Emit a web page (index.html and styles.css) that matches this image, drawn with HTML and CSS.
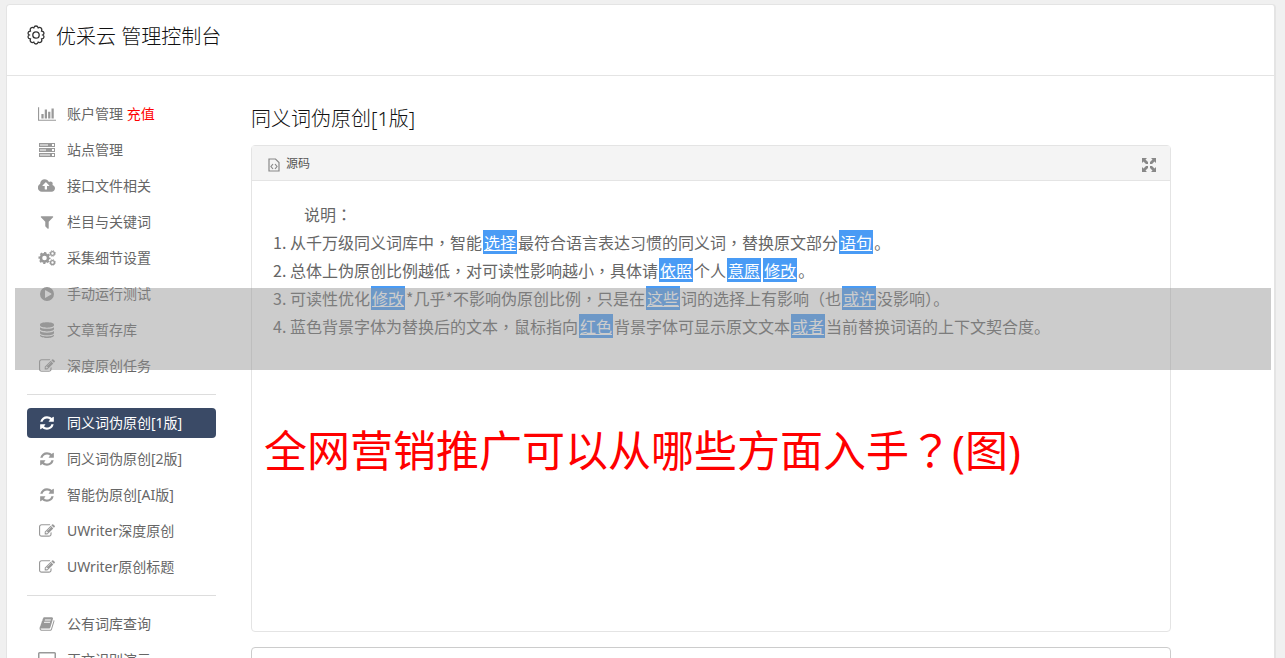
FILE: index.html
```html
<!DOCTYPE html>
<html lang="zh-CN">
<head>
<meta charset="utf-8">
<title>优采云 管理控制台</title>
<link rel="stylesheet" href="styles.css">
</head>
<body>
<svg class="sprite" aria-hidden="true">
  <symbol id="chart" viewBox="0 0 2048 1792"><path d="M640 896v512h-256v-512h256zm384-512v1024h-256v-1024h256zm1024 1152v128h-2048v-1536h128v1408h1920zm-640-896v768h-256v-768h256zm384-384v1152h-256v-1152h256z"/></symbol>
  <symbol id="server" viewBox="0 0 18 16"><path fill-rule="evenodd" d="M1 1h16v4H1zM2 2.500v1h8v-1zM14 2v2h2V2zM1 6h16v4H1zM2 7.500v1h6v-1zM14 7v2h2V7zM1 11h16v4H1zM2 12.500v1h10v-1zM14 12v2h2v-2z"/></symbol>
  <symbol id="cloud" viewBox="0 0 1920 1792"><path d="M1216 864q0-14-9-23l-352-352q-9-9-23-9t-23 9l-351 351q-10 12-10 24 0 14 9 23t23 9h224v352q0 13 9.500 22.500t22.500 9.500h192q13 0 22.500-9.500t9.500-22.500v-352h224q13 0 22.500-9.500t9.500-22.500zm640 288q0 159-112.500 271.500t-271.500 112.500h-1088q-185 0-316.500-131.500t-131.500-316.500q0-130 70-240t188-165q-2-30-2-43 0-212 150-362t362-150q156 0 285.500 87t188.500 231q71-62 166-62 106 0 181 75t75 181q0 76-41 138 130 31 213.500 135.500t83.500 238.500z"/></symbol>
  <symbol id="filter" viewBox="0 0 1792 1792"><path d="M1595 295q17 41-14 70l-493 493v742q0 42-39 59-13 5-25 5-27 0-45-19l-256-256q-19-19-19-45v-486l-493-493q-31-29-14-70 17-39 59-39h1280q42 0 59 39z"/></symbol>
  <symbol id="cogs" viewBox="0 0 18 16"><g fill="none" stroke="currentColor"><circle cx="6.500" cy="8" r="3.600" stroke-width="2.600"/><circle cx="6.500" cy="8" r="5.200" stroke-width="1.700" stroke-dasharray="2.200 1.884" stroke-dashoffset="1.100"/><circle cx="14.500" cy="3.500" r="1.900" stroke-width="1.400"/><circle cx="14.500" cy="3.500" r="2.800" stroke-width="1" stroke-dasharray="1.200 1"/><circle cx="14.500" cy="12.500" r="1.900" stroke-width="1.400"/><circle cx="14.500" cy="12.500" r="2.800" stroke-width="1" stroke-dasharray="1.200 1"/></g></symbol>
  <symbol id="play" viewBox="0 0 16 16"><path fill-rule="evenodd" d="M8 1a7 7 0 1 1 0 14A7 7 0 0 1 8 1zM6 4.500v7q0 .6.600.300l5.600-3.300q.6-.5 0-1L6.600 4.200Q6 4 6 4.500z"/></symbol>
  <symbol id="database" viewBox="0 0 16 16"><path d="M1 2.700C1-.5 15-.5 15 2.700v.6c0 3.200-14 3.200-14 0zM1 5.200c2 2.200 12 2.200 14 0v1.900c0 3.200-14 3.200-14 0zM1 9c2 2.200 12 2.200 14 0v1.900c0 3.200-14 3.200-14 0zM1 12.800c2 2.200 12 2.200 14 0v.6c0 3.300-14 3.300-14 0z"/></symbol>
  <symbol id="edit" viewBox="0 0 1792 1792"><path d="M888 1184l116-116-152-152-116 116v56h96v96h56zm440-720q-16-16-33 1l-350 350q-17 17-1 33t33-1l350-350q17-17 1-33zm80 594v190q0 119-84.500 203.500t-203.500 84.500h-832q-119 0-203.500-84.500t-84.500-203.500v-832q0-119 84.500-203.500t203.500-84.500h832q63 0 117 25 15 7 18 23 3 17-9 29l-49 49q-14 14-32 8-23-6-45-6h-832q-66 0-113 47t-47 113v832q0 66 47 113t113 47h832q66 0 113-47t47-113v-126q0-13 9-22l64-64q15-15 35-7t20 29zm-96-738l288 288-672 672h-288v-288zm444 132l-92 92-288-288 92-92q28-28 68-28t68 28l152 152q28 28 28 68t-28 68z"/></symbol>
  <symbol id="refresh" viewBox="0 0 1792 1792"><path d="M1639 1056q0 5-1 7-64 268-268 434.500t-478 166.500q-146 0-282.500-55t-243.500-157l-129 129q-19 19-45 19t-45-19-19-45v-448q0-26 19-45t45-19h448q26 0 45 19t19 45-19 45l-137 137q71 66 161 102t187 36q134 0 250-65t186-179q11-17 53-117 8-23 30-23h192q13 0 22.500 9.500t9.500 22.500zm25-800v448q0 26-19 45t-45 19h-448q-26 0-45-19t-19-45 19-45l138-138q-148-137-349-137-134 0-250 65t-186 179q-11 17-53 117-8 23-30 23h-199q-13 0-22.500-9.500t-9.500-22.500v-7q65-268 270-434.500t480-166.500q146 0 284 55.500t245 156.500l130-129q19-19 45-19t45 19 19 45z"/></symbol>
  <symbol id="book" viewBox="0 0 1792 1792"><path d="M1703 478q40 57 18 129l-275 906q-19 64-76.500 107.500t-122.500 43.500h-923q-77 0-148.500-53.500t-99.500-131.500q-24-67-2-127 0-4 3-27t4-37q1-8-3-21.500t-3-19.500q2-11 8-21t16.500-23.500 16.500-23.500q23-38 45-91.500t30-91.500q3-10 .5-30t-.5-28q3-11 17-28t17-23q21-36 42-92t25-90q1-9-2.500-32t.5-28q4-13 22-30.500t22-22.500q19-26 42.500-84.500t27.500-96.500q1-8-3-25.500t-2-26.500q2-8 9-18t18-23 17-21q8-12 16.500-30.500t15-35 16-36 19.500-32 26.500-23.500 36-11.500 47.500 5.500l-1 3q38-9 51-9h761q74 0 114 56t18 130l-274 906q-36 119-71.500 153.500t-128.500 34.500h-869q-27 0-38 15-11 16-1 43 24 70 144 70h923q29 0 56-15.500t35-41.500l300-987q7-22 5-57 38 15 59 43zm-1064 2q-4 13 2 22.500t20 9.500h608q13 0 25.500-9.500t16.500-22.500l21-64q4-13-2-22.500t-20-9.500h-608q-13 0-25.500 9.500t-16.500 22.500zm-83 256q-4 13 2 22.500t20 9.500h608q13 0 25.500-9.500t16.500-22.500l21-64q4-13-2-22.500t-20-9.500h-608q-13 0-25.500 9.500t-16.500 22.500z"/></symbol>
  <symbol id="screen" viewBox="0 0 18 16"><path fill-rule="evenodd" d="M1.500 0h15q1.500 0 1.500 1.500v10q0 1.500-1.500 1.500H11v1.500h2V16H5v-1.500h2V13H1.500Q0 13 0 11.500v-10Q0 0 1.500 0zm0 1.500v8.500h15V1.500z"/></symbol>
</svg>

<div class="panel">
  <header class="header">
    <svg class="gear" viewBox="0 0 20 20" aria-hidden="true"><path d="M7.800 2.800Q8.300 1 10 1t2.200 1.800q1.700-.8 2.900.3t.5 2.900Q17.900 6.400 18 8q0 1.300-1.300 2 1.300.7 1.300 2-.1 1.600-2.400 2 .7 1.800-.5 2.900t-2.900.3Q11.700 19 10 19t-2.200-1.800q-1.700.8-2.900-.3t-.5-2.900Q2.100 13.600 2 12q0-1.300 1.300-2Q2 9.300 2 8q.1-1.600 2.400-2-.7-1.800.5-2.900t2.900-.3z"/><circle cx="10" cy="10" r="3.200"/></svg>
    <h1 class="title">优采云 管理控制台</h1>
  </header>
  <div class="layout">
    <nav class="sidebar">
      <ul class="menu">
        <li><a class="item" href="#"><svg class="icon"><use href="#chart"/></svg><span>账户管理 <span class="recharge">充值</span></span></a></li>
        <li><a class="item" href="#"><svg class="icon"><use href="#server"/></svg>站点管理</a></li>
        <li><a class="item" href="#"><svg class="icon"><use href="#cloud"/></svg>接口文件相关</a></li>
        <li><a class="item" href="#"><svg class="icon"><use href="#filter"/></svg>栏目与关键词</a></li>
        <li><a class="item" href="#"><svg class="icon"><use href="#cogs"/></svg>采集细节设置</a></li>
        <li><a class="item" href="#"><svg class="icon"><use href="#play"/></svg>手动运行测试</a></li>
        <li><a class="item" href="#"><svg class="icon"><use href="#database"/></svg>文章暂存库</a></li>
        <li><a class="item" href="#"><svg class="icon"><use href="#edit"/></svg>深度原创任务</a></li>
      </ul>
      <hr class="rule">
      <ul class="menu">
        <li><a class="item active" href="#" aria-current="page"><svg class="icon"><use href="#refresh"/></svg>同义词伪原创[1版]</a></li>
        <li><a class="item" href="#"><svg class="icon"><use href="#refresh"/></svg>同义词伪原创[2版]</a></li>
        <li><a class="item" href="#"><svg class="icon"><use href="#refresh"/></svg>智能伪原创[AI版]</a></li>
        <li><a class="item" href="#"><svg class="icon"><use href="#edit"/></svg>UWriter深度原创</a></li>
        <li><a class="item" href="#"><svg class="icon"><use href="#edit"/></svg>UWriter原创标题</a></li>
      </ul>
      <hr class="rule">
      <ul class="menu">
        <li><a class="item" href="#"><svg class="icon"><use href="#book"/></svg>公有词库查询</a></li>
        <li><a class="item" href="#"><svg class="icon"><use href="#screen"/></svg>正文识别演示</a></li>
      </ul>
    </nav>
    <main class="main">
      <h2 class="heading">同义词伪原创[1版]</h2>
      <section class="editor">
        <div class="toolbar">
          <button class="tool" type="button"><svg class="source" viewBox="0 0 12 14" aria-hidden="true"><path d="M1 1h6.500L11 4.500V13H1zM5 6L3 8.500 5 11M7 6l2 2.500L7 11"/></svg>源码</button>
          <button class="tool" type="button" aria-label="全屏"><svg class="expand" viewBox="0 0 14 14" aria-hidden="true"><path d="M0 0h5L3.500 1.500 6 4v2H4L1.500 3.500 0 5zM14 0v5l-1.500-1.500L10 6H8V4l2.500-2.500L9 0zM0 14V9l1.500 1.500L4 8h2v2l-2.500 2.500L5 14zM14 14H9l1.500-1.500L8 10V8h2l2.500 2.500L14 9z"/></svg></button>
        </div>
        <div class="content">
          <p class="intro">说明<span class="mid" lang="zh-TW">：</span></p>
          <ol class="notes">
            <li>从千万级同义词库中<span class="mid" lang="zh-TW">，</span>智能<mark>选择</mark>最符合语言表达习惯的同义词<span class="mid" lang="zh-TW">，</span>替换原文部分<mark>语句</mark>。</li>
            <li>总体上伪原创比例越低<span class="mid" lang="zh-TW">，</span>对可读性影响越小<span class="mid" lang="zh-TW">，</span>具体请<mark>依照</mark>个人<mark>意愿</mark><mark>修改</mark>。</li>
            <li>可读性优化<mark>修改</mark>*几乎*不影响伪原创比例<span class="mid" lang="zh-TW">，</span>只是在<mark>这些</mark>词的选择上有影响<span class="mid" lang="zh-TW">（</span>也<mark>或许</mark>没影响<span class="mid" lang="zh-TW">）</span>。</li>
            <li>蓝色背景字体为替换后的文本<span class="mid" lang="zh-TW">，</span>鼠标指向<mark>红色</mark>背景字体可显示原文文本<mark>或者</mark>当前替换词语的上下文契合度。</li>
          </ol>
        </div>
      </section>
      <textarea class="result" aria-label="结果"></textarea>
    </main>
  </div>
</div>
<div class="band"></div>
<div class="caption">全网营销推广可以从哪些方面入手<span class="mid" lang="zh-TW">？</span>(图)</div>
</body>
</html>
```
FILE: styles.css
```css
* { box-sizing: border-box; }

body {
  margin: 0;
  position: relative;
  height: 100vh;
  overflow: hidden;
  padding: 4px 9px 0 6px;
  background: #f0f0f0;
  color: #333;
  font-family: "Noto Sans", "Noto Sans CJK SC", sans-serif;
  font-size: 14px;
  font-weight: 400;
}

h1, h2, p, ul, ol { margin: 0; padding: 0; font-weight: 400; }

.sprite { position: absolute; width: 0; height: 0; }

/* full-width punctuation centred in its cell */
.mid { font-family: "Noto Sans CJK TC", sans-serif; }

.panel {
  background: #fff;
  border: 1px solid #e4e4e4;
  border-right-width: 2px;
  border-radius: 4px;
}

.header {
  display: flex;
  align-items: center;
  gap: 10px;
  padding: 16px 19px 24px;
  border-bottom: 1px solid #e4e4e4;
}
.gear { width: 20px; height: 20px; margin-bottom: 2px; fill: none; stroke: #333; stroke-width: 1.3; }
.title { padding-top: 1px; font-size: 20px; font-weight: 300; line-height: 29px; color: #111; }

.layout {
  display: grid;
  grid-template-columns: 189px 1fr;
  gap: 35px;
  padding: 23px 103px 0 20px;
}

.menu { list-style: none; display: flex; flex-direction: column; gap: 6px; }
.item {
  display: flex;
  align-items: center;
  gap: 11px;
  height: 30px;
  padding-left: 11px;
  border-radius: 4px;
  color: #666;
  line-height: 20px;
  text-decoration: none;
}
.icon { width: 18px; height: 16px; color: #999; fill: currentColor; }
.recharge { color: #f00; }
.active { background: #3a4a66; color: #fff; }
.active .icon { color: #fff; }
.rule { margin: 13px 0; border: 0; border-top: 1px solid #ddd; }

.main { padding-top: 5px; }
.heading { margin-bottom: 11px; font-size: 20px; font-weight: 300; line-height: 30px; color: #111; }

.editor {
  min-height: 487px;
  border: 1px solid #e4e4e4;
  border-radius: 4px;
}
.toolbar {
  display: flex;
  justify-content: space-between;
  align-items: center;
  height: 35px;
  padding: 2px 14px 0 16px;
  background: #f4f4f4;
  border-bottom: 1px solid #e4e4e4;
}
.tool {
  display: flex;
  align-items: center;
  gap: 6px;
  padding: 0;
  border: 0;
  background: none;
  color: #555;
  font: inherit;
  font-size: 12px;
  line-height: 20px;
}
.source { width: 12px; height: 14px; margin-top: 2px; fill: none; stroke: #888; stroke-width: 1.2; }
.expand { width: 14px; height: 14px; margin-top: 2px; fill: #888; }

.content {
  padding: 19px 20px;
  color: #666;
  font-family: "Noto Sans CJK SC", sans-serif;
  font-size: 16px;
  line-height: 28px;
}
.intro { text-indent: 32px; }
.notes { padding-left: 18px; }
mark {
  margin: 0 1px;
  padding: 0 1px;
  background: #499bf5;
  color: #fff;
  text-decoration: underline;
}

.result {
  display: block;
  width: 100%;
  height: 120px;
  margin-top: 15px;
  border: 1px solid #ccc;
  border-radius: 4px;
  resize: none;
}

.band {
  position: absolute;
  top: 288px;
  left: 15px;
  right: 14px;
  height: 82px;
  background: rgba(148, 148, 148, .48);
}
.caption {
  position: absolute;
  top: 418px;
  left: 0;
  right: 0;
  color: #f00;
  font-size: 43px;
  font-weight: 400;
  line-height: 60px;
  text-align: center;
}
```
